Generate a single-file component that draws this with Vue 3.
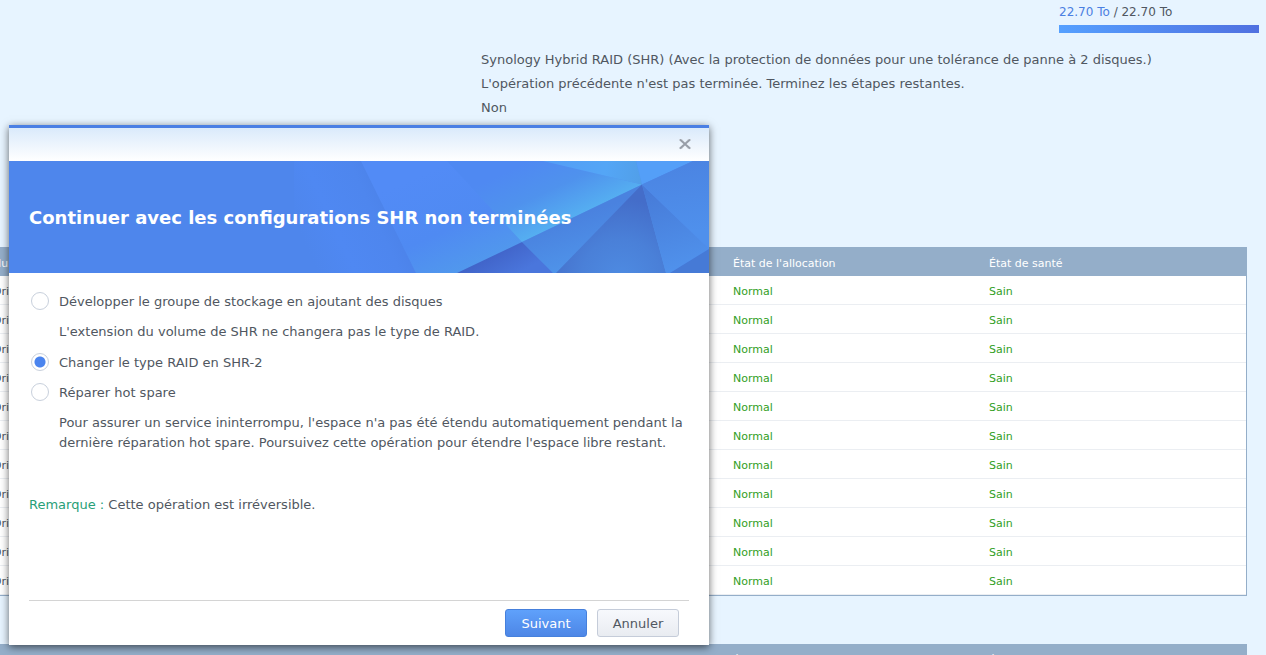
<script setup>
import { ref } from 'vue'

const choice = ref('shr2')
const disks = Array.from({ length: 11 }, (_, i) => ({
  name: `Drive ${i + 1}`,
  allocation: 'Normal',
  health: 'Sain'
}))
</script>

<template>
  <div class="page">
    <main class="background">
      <div class="usage">
        <div class="usage-text"><span class="used">22.70 To</span> / 22.70 To</div>
        <div class="usage-bar"></div>
      </div>
      <div class="info">
        <div>Synology Hybrid RAID (SHR) (Avec la protection de données pour une tolérance de panne à 2 disques.)</div>
        <div>L'opération précédente n'est pas terminée. Terminez les étapes restantes.</div>
        <div>Non</div>
      </div>
      <table class="grid">
        <colgroup><col class="c-name" /><col class="c-alloc" /><col /></colgroup>
        <thead>
          <tr><th>Numéro</th><th>État de l'allocation</th><th>État de santé</th></tr>
        </thead>
        <tbody>
          <tr v-for="d in disks" :key="d.name">
            <td>{{ d.name }}</td>
            <td class="ok">{{ d.allocation }}</td>
            <td class="ok">{{ d.health }}</td>
          </tr>
        </tbody>
      </table>
      <table class="grid">
        <colgroup><col class="c-name" /><col class="c-alloc" /><col /></colgroup>
        <thead>
          <tr><th>Numéro</th><th>État de l'allocation</th><th>État de santé</th></tr>
        </thead>
      </table>
    </main>

    <section class="dialog" role="dialog" aria-labelledby="dialog-title">
      <header class="titlebar">
        <button class="close" type="button" aria-label="Fermer">
          <svg width="14" height="12" viewBox="0 0 14 12">
            <path d="M1 0h3L7 3.500L10 0h3v1L8.500 5L13 9v1h-3L7 6.500L4 10H1V9L5.500 5L1 1z" fill="#d3d8df" />
            <path d="M2 0.500L12 9.500M12 0.500L2 9.500" fill="none" stroke="#979ea8" stroke-width="1.800" />
          </svg>
        </button>
      </header>

      <div class="banner">
        <svg class="facets" viewBox="0 0 700 112" preserveAspectRatio="xMaxYMid slice" aria-hidden="true">
          <defs>
            <linearGradient id="gLeft" gradientUnits="userSpaceOnUse" x1="285" y1="60" x2="390" y2="12">
              <stop offset="0" stop-color="#4e86ec" />
              <stop offset="0.3" stop-color="#4f88f2" />
              <stop offset="0.65" stop-color="#4e86ee" />
              <stop offset="1" stop-color="#4a7fe4" />
            </linearGradient>
            <linearGradient id="gMid" gradientUnits="userSpaceOnUse" x1="420" y1="10" x2="465" y2="112">
              <stop offset="0" stop-color="#528bf6" />
              <stop offset="0.55" stop-color="#4f8af2" />
              <stop offset="1" stop-color="#519aec" />
            </linearGradient>
            <linearGradient id="gCyan" gradientUnits="userSpaceOnUse" x1="520" y1="0" x2="550" y2="64">
              <stop offset="0" stop-color="#4f89f2" />
              <stop offset="0.5" stop-color="#4f92ed" />
              <stop offset="1" stop-color="#55aff1" />
            </linearGradient>
            <linearGradient id="gTop" gradientUnits="userSpaceOnUse" x1="540" y1="0" x2="633" y2="20">
              <stop offset="0" stop-color="#539df6" />
              <stop offset="0.6" stop-color="#54a6f6" />
              <stop offset="1" stop-color="#519fe8" />
            </linearGradient>
            <linearGradient id="gShade" gradientUnits="userSpaceOnUse" x1="570" y1="54" x2="590" y2="112">
              <stop offset="0" stop-color="#4a82df" />
              <stop offset="1" stop-color="#5098ec" />
            </linearGradient>
            <radialGradient id="gDeep" gradientUnits="userSpaceOnUse" cx="612" cy="118" r="80">
              <stop offset="0" stop-color="#4e8be2" />
              <stop offset="0.5" stop-color="#4a80d8" />
              <stop offset="1" stop-color="#446dc9" />
            </radialGradient>
            <linearGradient id="gRight" gradientUnits="userSpaceOnUse" x1="640" y1="30" x2="665" y2="112">
              <stop offset="0" stop-color="#477bd8" />
              <stop offset="1" stop-color="#5092ec" />
            </linearGradient>
            <linearGradient id="gEdge" gradientUnits="userSpaceOnUse" x1="675" y1="0" x2="685" y2="70">
              <stop offset="0" stop-color="#4b84e2" />
              <stop offset="1" stop-color="#4f90ec" />
            </linearGradient>
            <linearGradient id="gFoot" gradientUnits="userSpaceOnUse" x1="485" y1="92" x2="500" y2="118">
              <stop offset="0" stop-color="#4164c9" />
              <stop offset="1" stop-color="#4a76dc" />
            </linearGradient>
          </defs>
          <rect width="700" height="112" fill="#4e86ec" />
          <path d="M285 0H352L407 112H285z" fill="url(#gLeft)" />
          <path d="M352 0H634V112H407z" fill="url(#gMid)" />
          <path d="M438 0H534L633 23.500L513 81z" fill="url(#gCyan)" />
          <path d="M534 0H627L633 23.500z" fill="url(#gTop)" />
          <path d="M627 0H684L633 23.500z" fill="#549ff8" />
          <path d="M633 23.500L513 81L544 112H660z" fill="url(#gShade)" />
          <path d="M513 81L448 112H544z" fill="url(#gFoot)" />
          <path d="M633 23.500L547 112H657z" fill="url(#gDeep)" />
          <path d="M633 23.500L657 112H661L700 88z" fill="url(#gRight)" />
          <path d="M633 23.500L684 0H700V88z" fill="url(#gEdge)" />
          <path d="M661 112L700 88V112z" fill="#467ad6" />
        </svg>
        <h1 id="dialog-title">Continuer avec les configurations SHR non terminées</h1>
      </div>

      <form class="body" @submit.prevent>
        <label class="option"><input v-model="choice" type="radio" name="op" value="expand" />Développer le groupe de stockage en ajoutant des disques</label>
        <p class="hint">L'extension du volume de SHR ne changera pas le type de RAID.</p>
        <label class="option"><input v-model="choice" type="radio" name="op" value="shr2" />Changer le type RAID en SHR-2</label>
        <label class="option"><input v-model="choice" type="radio" name="op" value="repair" />Réparer hot spare</label>
        <p class="hint">Pour assurer un service ininterrompu, l'espace n'a pas été étendu automatiquement pendant la dernière réparation hot spare. Poursuivez cette opération pour étendre l'espace libre restant.</p>
        <p class="note"><span>Remarque :</span> Cette opération est irréversible.</p>
      </form>

      <footer class="actions">
        <button class="btn primary" type="button">Suivant</button>
        <button class="btn" type="button">Annuler</button>
      </footer>
    </section>
  </div>
</template>

<style>
body {
  margin: 0;
  background: #e7f4ff;
}
</style>

<style scoped>
.page {
  position: relative;
  height: 100vh;
  overflow: hidden;
  background: #e7f4ff;
  color: #505761;
  font-family: Verdana, "DejaVu Sans", sans-serif;
  font-size: 13px;
}
.usage {
  width: 200px;
  margin: 0 7px 0 auto;
  padding-top: 4px;
  font-size: 12px;
  line-height: 16px;
}
.used {
  color: #4a80e2;
}
.usage-bar {
  height: 8px;
  margin-top: 5px;
  background: linear-gradient(to right, #55a0ff, #5070e0);
}
.info {
  margin: 15px 0 0 481px;
  line-height: 24px;
}
.grid {
  width: calc(100% - 1px);
  margin: 127px 0 48px -18px;
  table-layout: fixed;
  border-collapse: separate;
  border-spacing: 0;
  border: 1px solid #94aec9;
  border-top: 0;
  background: #fff;
  font-size: 11px;
}
.grid + .grid {
  margin-top: 0;
}
.c-name {
  width: 740px;
}
.c-alloc {
  width: 256px;
}
.grid th {
  height: 29px;
  box-sizing: border-box;
  padding: 3px 10px 0;
  background: #94aec9;
  color: #fff;
  font-weight: normal;
  text-align: left;
}
.grid td {
  height: 29px;
  box-sizing: border-box;
  padding: 2px 10px 0;
  border-bottom: 1px solid #ebeef2;
}
.grid .ok {
  color: #32a01e;
}
.dialog {
  position: absolute;
  top: 125px;
  left: 9px;
  width: 700px;
  border-top: 3px solid #4a7fe4;
  background: #fff;
  box-shadow: 0 2px 8px rgba(0, 0, 0, 0.6);
}
.titlebar {
  display: flex;
  justify-content: flex-end;
  align-items: center;
  height: 33px;
  padding-right: 17px;
  box-sizing: border-box;
  background: linear-gradient(#daeafb, #fff);
}
.close {
  display: flex;
  padding: 0;
  border: 0;
  background: none;
}
.banner {
  display: grid;
  align-items: center;
  height: 112px;
  background: #4e86ec;
}
.facets,
.banner h1 {
  grid-area: 1 / 1;
}
.facets {
  display: block;
  width: 100%;
  height: 112px;
}
.banner h1 {
  z-index: 1;
  margin: 0;
  padding: 2px 0 0 20px;
  color: #fff;
  font-size: 18px;
  line-height: 24px;
  font-weight: bold;
}
.body {
  padding: 13px 20px 0;
}
.option {
  display: flex;
  align-items: center;
  height: 30px;
}
.option input {
  appearance: none;
  width: 18px;
  height: 18px;
  margin: 0 10px 0 2px;
  border: 1px solid #c8d0dc;
  border-radius: 50%;
  background: #fff;
}
.option input:checked {
  background: radial-gradient(circle, #4a84ee 5px, #fff 6px);
}
.hint {
  margin: 6px 0 5px 30px;
  line-height: 20px;
}
.note {
  margin: 42px 0 0;
  line-height: 20px;
}
.note span {
  color: #28a078;
}
.actions {
  display: flex;
  justify-content: flex-end;
  gap: 10px;
  margin: 85px 20px 0;
  padding: 8px 10px;
  border-top: 1px solid #d4d4d4;
}
.btn {
  width: 82px;
  height: 28px;
  padding: 0;
  border: 1px solid #c5ccd9;
  border-radius: 3px;
  background: linear-gradient(#f7f9fd, #e9ecf1);
  color: #505761;
  font: inherit;
}
.primary {
  border-color: #4680dc;
  background: linear-gradient(#5fa1fb, #4d86e6);
  color: #fff;
}
</style>
